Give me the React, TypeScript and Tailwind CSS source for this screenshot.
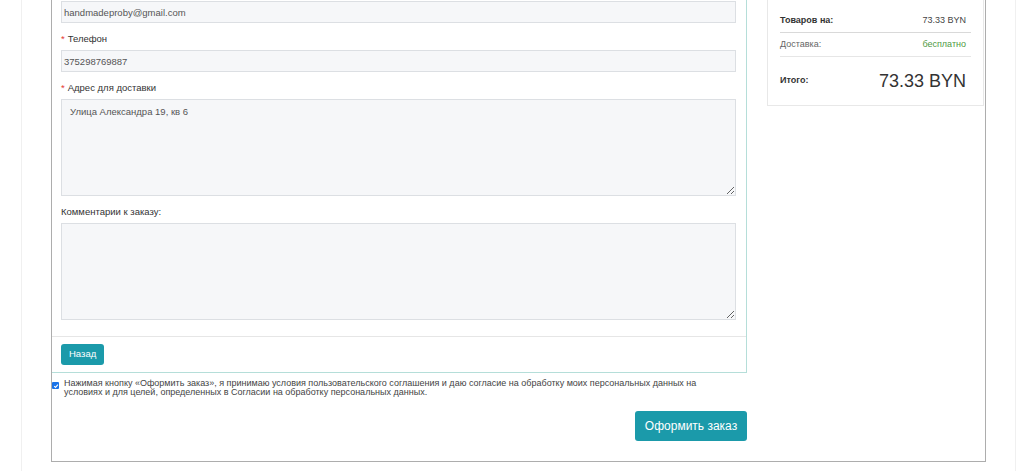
import React from "react"

const font = { fontFamily: '"Liberation Sans", Arial, sans-serif' }

function Label({ text, required }: { text: string; required?: boolean }) {
  return (
    <div className="text-[9.5px] leading-[14px] mb-[4px] text-[#333]">
      {required && <span className="text-[#e53935] mr-[3px]">*</span>}
      {text}
    </div>
  )
}

function Input({ value }: { value: string }) {
  return (
    <input
      readOnly
      value={value}
      className="block w-full h-[22px] px-[2px] bg-[#f6f7f9] border border-[#dcdfe3] text-[9.5px] text-[#555] outline-none"
    />
  )
}

function Area({ value }: { value?: string }) {
  return (
    <textarea
      readOnly
      defaultValue={value}
      className="block w-full h-[97px] px-[8px] py-[5px] bg-[#f6f7f9] border border-[#dcdfe3] text-[9.5px] text-[#555] outline-none resize-y"
    />
  )
}

export default function App() {
  return (
    <div className="w-full h-[471px] bg-white overflow-hidden flex flex-col" style={font}>
      <div className="ml-[21px] w-[995px] h-[471px] border-x border-[#f0f0f0] flex flex-col">
        <div className="ml-[29px] w-[935px] -mt-[28px] border border-[#adadad] flex">
          {/* left: form */}
          <div className="w-[695px] flex flex-col">
            <div className="border-t border-r border-b border-[#b5ded9]">
              <div className="pt-[9px] pl-[9px] pr-[10px] pb-[16px]">
                <div className="mb-[9px]">
                  {/* e-mail label sits above the visible area */}
                  <div className="h-[18px]" />
                  <Input value="handmadeproby@gmail.com" />
                </div>
                <div className="mb-[9px]">
                  <Label text="Телефон" required />
                  <Input value="375298769887" />
                </div>
                <div className="mb-[9px]">
                  <Label text="Адрес для доставки" required />
                  <Area value="Улица Александра 19, кв 6" />
                </div>
                <div>
                  <Label text="Комментарии к заказу:" />
                  <Area />
                </div>
              </div>
              <div className="flex border-t border-[#e6e6e6] pt-[7px] pb-[7px] pl-[9px]">
                <button className="h-[21px] px-[8px] rounded-[3px] bg-[#1b9aaa] text-white text-[9.5px] font-medium">
                  Назад
                </button>
              </div>
            </div>

            <div className="flex items-start mt-[6px]">
              <span className="mt-[3px] w-[7px] h-[7px] rounded-[1px] bg-[#1a73e8] flex items-center justify-center shrink-0">
                <svg viewBox="0 0 10 10" className="w-[6px] h-[6px]">
                  <path d="M2 5.2 L4.2 7.4 L8.2 2.6" fill="none" stroke="white" strokeWidth="1.8" />
                </svg>
              </span>
              <p className="ml-[5px] text-[9px] leading-[9px] text-[#444]">
                Нажимая кнопку «Оформить заказ», я принимаю условия пользовательского соглашения и даю согласие на обработку моих персональных данных на
                <br />
                условиях и для целей, определенных в Согласии на обработку персональных данных.
              </p>
            </div>

            <div className="flex justify-end mt-[14px] mb-[20px]">
              <button className="w-[112px] h-[30px] rounded-[3px] bg-[#1b9aaa] text-white text-[12px]">
                Оформить заказ
              </button>
            </div>
          </div>

          {/* right: summary */}
          <div className="flex-1">
            <div className="ml-[20px] w-[217px] mt-[20px] border border-[#e8e8e8] px-[12px] pt-[15px]">
              <div className="h-[24px] border-b border-[#d9d9d9] flex items-center justify-between pr-[5px] text-[9px]">
                <span className="font-semibold text-[#333]">Товаров на:</span>
                <span className="text-[#444]">73.33 BYN</span>
              </div>
              <div className="h-[24px] border-b border-[#e6e6e6] flex items-center justify-between pr-[5px] text-[9px]">
                <span className="text-[#666]">Доставка:</span>
                <span className="text-[#4f9a43]">бесплатно</span>
              </div>
              <div className="h-[48px] flex items-center justify-between pr-[5px]">
                <span className="text-[9px] font-semibold text-[#333]">Итого:</span>
                <span className="text-[18px] text-[#333]">73.33 BYN</span>
              </div>
            </div>
          </div>
        </div>
      </div>
    </div>
  )
}
